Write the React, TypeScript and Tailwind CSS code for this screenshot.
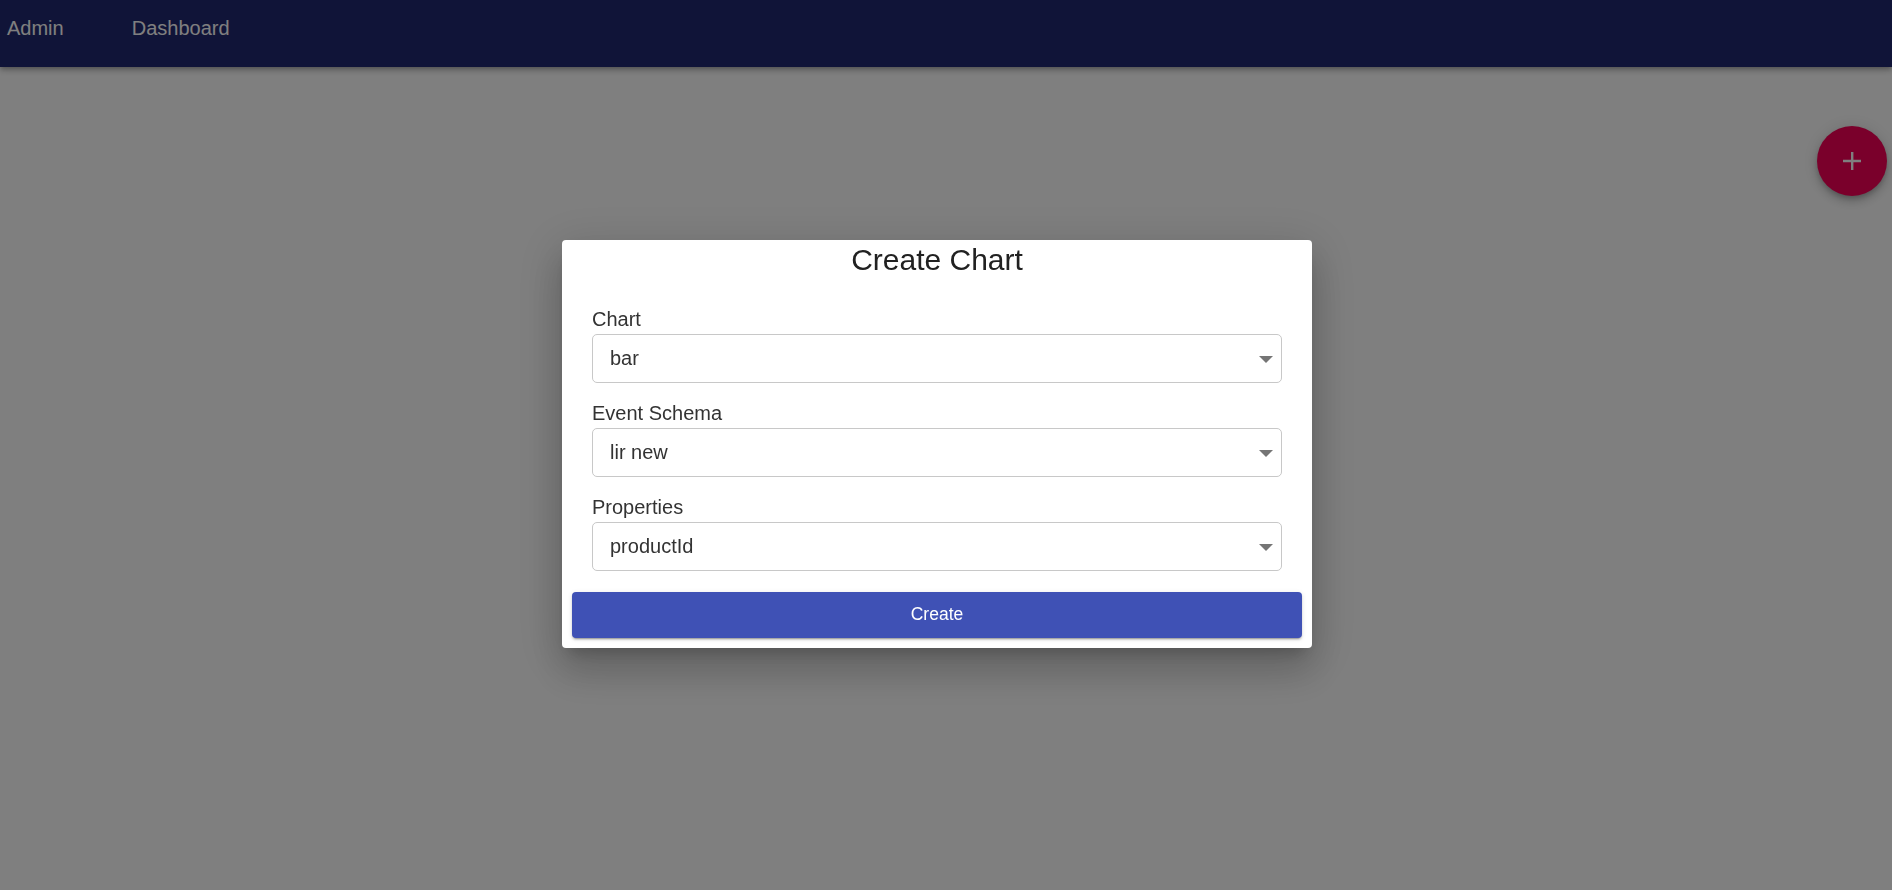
import { useState } from 'react';

type Field = {
  label: string;
  value: string;
  options: string[];
};

const FIELDS: Field[] = [
  { label: 'Chart', value: 'bar', options: ['bar', 'line', 'pie'] },
  { label: 'Event Schema', value: 'lir new', options: ['lir new'] },
  { label: 'Properties', value: 'productId', options: ['productId'] },
];

function SelectField({ field }: { field: Field }) {
  const [value, setValue] = useState(field.value);
  return (
    <div className="flex flex-col">
      <label className="mb-[3px] text-[20px] leading-[23px] text-[#333333]">{field.label}</label>
      <div className="relative h-[49px] rounded-[5px] border border-[#c8c8c8] bg-white">
        <select
          value={value}
          onChange={e => setValue(e.target.value)}
          className="h-full w-full appearance-none bg-transparent pb-[2px] pl-[17px] pr-10 text-[20px] text-[#333333] outline-none"
        >
          {field.options.map(o => (
            <option key={o} value={o}>
              {o}
            </option>
          ))}
        </select>
        <svg
          className="pointer-events-none absolute right-[8px] top-[21px]"
          width="14"
          height="7"
          viewBox="0 0 14 7"
        >
          <path d="M0 0h14L7 7z" fill="#757575" />
        </svg>
      </div>
    </div>
  );
}

export default function App() {
  return (
    <div className="relative min-h-screen bg-white font-['Liberation_Sans',Arial,sans-serif]">
      <header className="flex h-[67px] gap-[68px] bg-[#212870] pl-[7px] pt-[17px] shadow-[0_2px_4px_-1px_rgba(0,0,0,0.2),0_4px_5px_0_rgba(0,0,0,0.14),0_1px_10px_0_rgba(0,0,0,0.12)]">
        <span className="text-[20px] leading-[23px] text-white">Admin</span>
        <span className="text-[20px] leading-[23px] text-white">Dashboard</span>
      </header>

      <button className="absolute right-[5px] top-[126px] flex h-[70px] w-[70px] items-center justify-center rounded-full bg-[#f50057] shadow-[0_3px_5px_-1px_rgba(0,0,0,0.2),0_6px_10px_0_rgba(0,0,0,0.14),0_1px_18px_0_rgba(0,0,0,0.12)]">
        <svg width="18" height="18" viewBox="0 0 18 18">
          <path d="M8 0h2.4v18H8zM0 7.8h18v2.4H0z" fill="#ffffff" />
        </svg>
      </button>

      <div className="fixed inset-0 flex items-start justify-center bg-black/50 pr-[18px] pt-[240px]">
        <div className="w-[750px] rounded-[4px] bg-white px-[10px] pb-[10px] shadow-[0_11px_15px_-7px_rgba(0,0,0,0.2),0_24px_38px_3px_rgba(0,0,0,0.14),0_9px_46px_8px_rgba(0,0,0,0.12)]">
          <h2 className="mt-[2px] text-center text-[30px] leading-[35px] text-[#212121]">Create Chart</h2>
          <div className="mt-[31px] flex flex-col gap-[19px] px-[20px]">
            {FIELDS.map(f => (
              <SelectField key={f.label} field={f} />
            ))}
          </div>
          <button className="mt-[21px] h-[46px] w-full rounded-[4px] bg-[#3f51b5] pb-[2px] text-[17.5px] text-white shadow-[0_3px_1px_-2px_rgba(0,0,0,0.2),0_2px_2px_0_rgba(0,0,0,0.14),0_1px_5px_0_rgba(0,0,0,0.12)]">
            Create
          </button>
        </div>
      </div>
    </div>
  );
}
